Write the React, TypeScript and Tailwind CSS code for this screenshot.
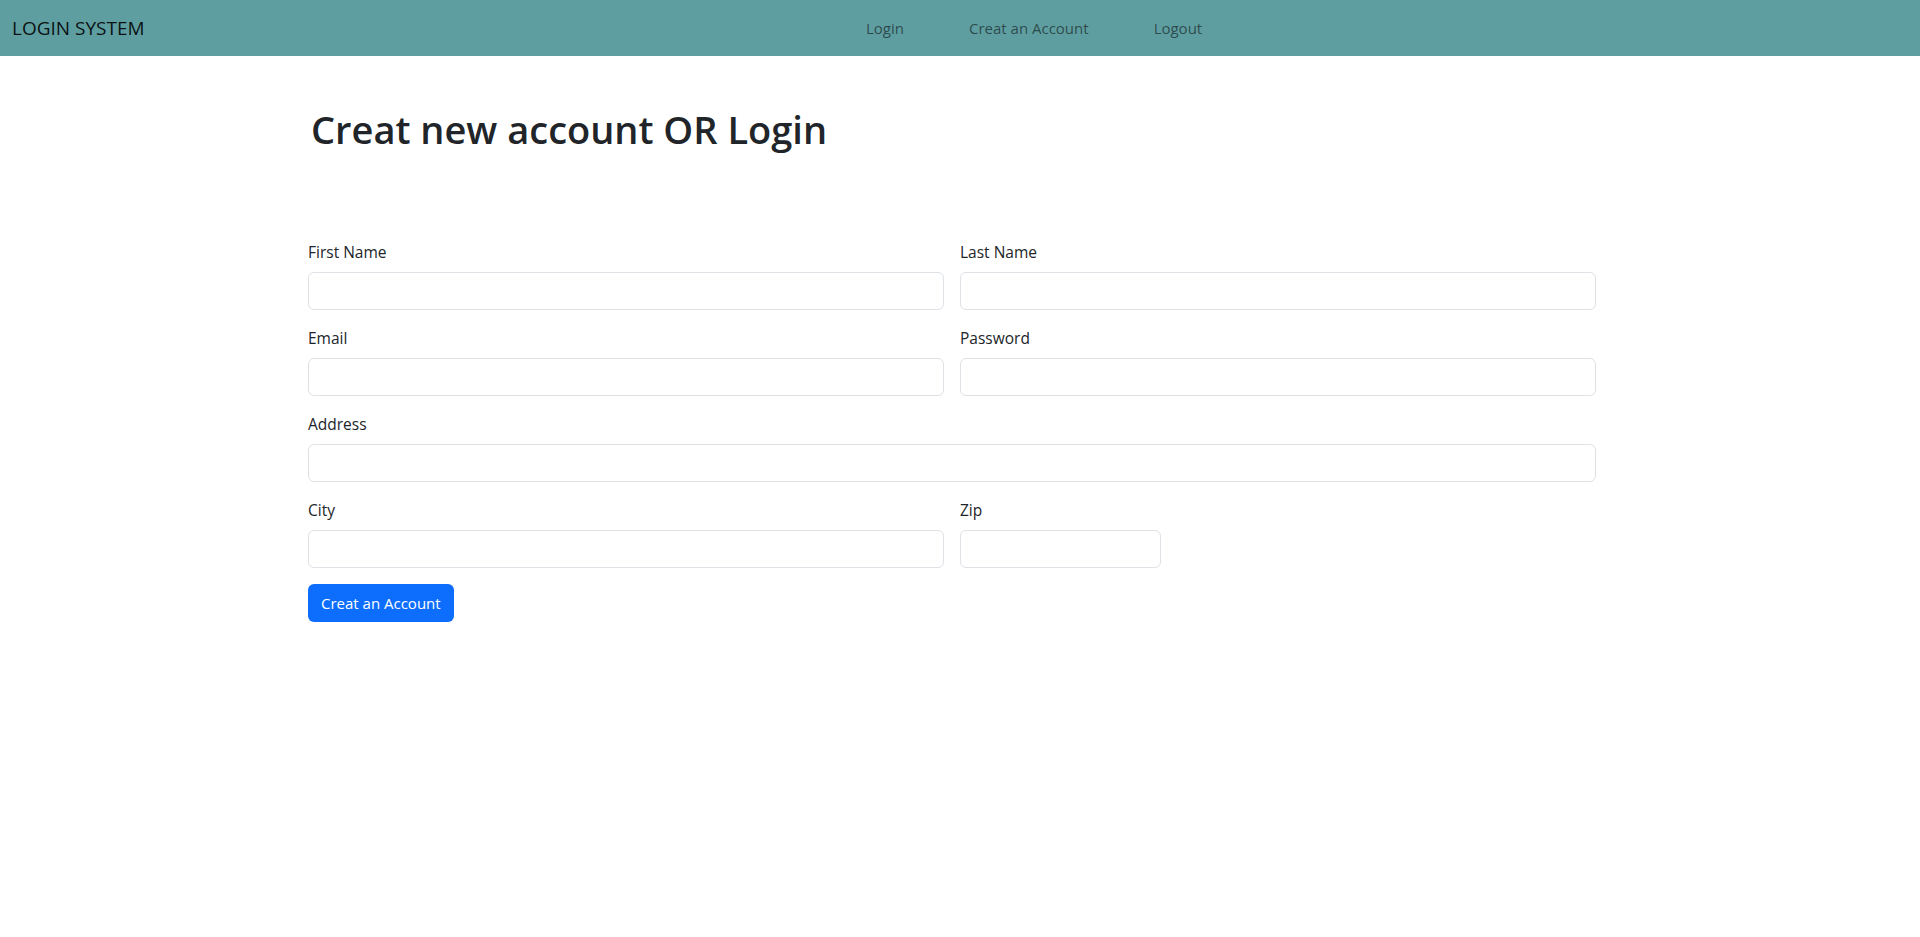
import React from "react";

const fieldRows = [
  { label: "First Name", span: "col-span-6", type: "text" },
  { label: "Last Name", span: "col-span-6", type: "text" },
  { label: "Email", span: "col-span-6", type: "email" },
  { label: "Password", span: "col-span-6", type: "password" },
  { label: "Address", span: "col-span-12", type: "text" },
  { label: "City", span: "col-span-6", type: "text" },
  { label: "Zip", span: "col-span-2", type: "text" },
];

function Field({ label, span, type }: { label: string; span: string; type: string }) {
  return (
    <div className={span}>
      <label className="mb-2 block text-[15.5px] leading-6 text-[#212529]">{label}</label>
      <input
        type={type}
        className="block h-[38px] w-full rounded-[6px] border border-[#dee2e6] bg-white px-3 text-base text-[#212529] outline-none"
      />
    </div>
  );
}

export default function App() {
  return (
    <div className="min-h-screen bg-white font-['Open_Sans',sans-serif]">
      {/* Navbar */}
      <nav className="flex h-14 items-center bg-[#5f9ea0] pl-3">
        <a className="w-[854px] text-[19px] leading-[30px] text-black/90">LOGIN SYSTEM</a>
        <ul className="flex items-center gap-[65px]">
          <li className="text-[15px] leading-6 text-black/55">Login</li>
          <li className="text-[15px] leading-6 text-black/55">Creat an Account</li>
          <li className="text-[15px] leading-6 text-black/55">Logout</li>
        </ul>
      </nav>

      <div className="ml-[308px] w-[1288px]">
        <h1 className="ml-[3px] mt-[52px] text-[38px] font-semibold leading-[43px] text-[#212529]">
          Creat new account OR Login
        </h1>

        <form className="mt-[89px] grid grid-cols-12 gap-4" onSubmit={(e) => e.preventDefault()}>
          {fieldRows.map((f) => (
            <Field key={f.label} {...f} />
          ))}
          <div className="col-span-12">
            <button
              type="submit"
              className="h-[38px] rounded-[6px] bg-[#0d6efd] px-[13px] text-[15px] leading-6 text-white"
            >
              Creat an Account
            </button>
          </div>
        </form>
      </div>
    </div>
  );
}
